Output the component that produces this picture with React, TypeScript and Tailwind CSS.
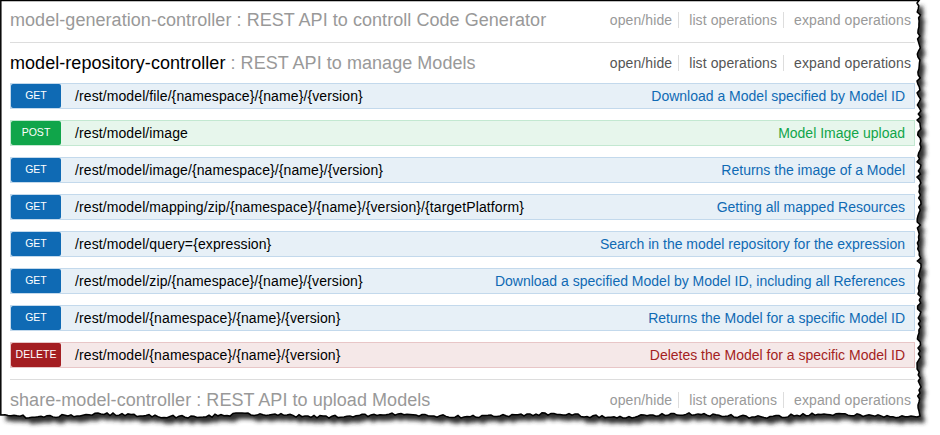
import React from "react";

type Method = "GET" | "POST" | "DELETE";

const ops: { m: Method; path: string; summary: string }[] = [
  { m: "GET", path: "/rest/model/file/{namespace}/{name}/{version}", summary: "Download a Model specified by Model ID" },
  { m: "POST", path: "/rest/model/image", summary: "Model Image upload" },
  { m: "GET", path: "/rest/model/image/{namespace}/{name}/{version}", summary: "Returns the image of a Model" },
  { m: "GET", path: "/rest/model/mapping/zip/{namespace}/{name}/{version}/{targetPlatform}", summary: "Getting all mapped Resources" },
  { m: "GET", path: "/rest/model/query={expression}", summary: "Search in the model repository for the expression" },
  { m: "GET", path: "/rest/model/zip/{namespace}/{name}/{version}", summary: "Download a specified Model by Model ID, including all References" },
  { m: "GET", path: "/rest/model/{namespace}/{name}/{version}", summary: "Returns the Model for a specific Model ID" },
  { m: "DELETE", path: "/rest/model/{namespace}/{name}/{version}", summary: "Deletes the Model for a specific Model ID" },
];

const styles: Record<Method, { row: string; badge: string; text: string }> = {
  GET: { row: "bg-[#e7f0f7] border-[#c3d9ec]", badge: "bg-[#0f6ab4]", text: "text-[#0f6ab4]" },
  POST: { row: "bg-[#e7f6ec] border-[#c3e8d1]", badge: "bg-[#10a54a]", text: "text-[#10a54a]" },
  DELETE: { row: "bg-[#f5e8e8] border-[#e8c6c7]", badge: "bg-[#a41e22]", text: "text-[#a41e22]" },
};

function rng(seed: number) {
  let s = seed;
  return () => {
    s = (s * 16807) % 2147483647;
    return (s - 1) / 2147483646;
  };
}

function paperPath() {
  const r = rng(11);
  const pts: [number, number][] = [[0.75, 0.5], [919, 0.5]];
  for (let y = 3; y < 414; y += 3) pts.push([919 + (r() - 0.5) * 4, y]);
  pts.push([920, 416]);
  for (let x = 917; x > 2; x -= 3) pts.push([x, 415.5 + (r() - 0.5) * 3 + Math.sin(x / 23) * 1.3]);
  pts.push([0.75, 415]);
  return "M" + pts.map((p) => p[0].toFixed(1) + "," + p[1].toFixed(1)).join("L") + "Z";
}

const PATH = paperPath();

function Links({ dark }: { dark?: boolean }) {
  const c = dark ? "text-[#555]" : "text-[#999]";
  return (
    <ul className={`flex items-center text-[14px] leading-4 tracking-[0.1px] ${c}`}>
      <li className="pr-[6px] border-r border-[#ddd]">open/hide</li>
      <li className="pl-[10px] pr-[6px] border-r border-[#ddd]">list operations</li>
      <li className="pl-[10px] pr-[4px]">expand operations</li>
    </ul>
  );
}

function Header({ name, desc, active, h }: { name: string; desc: string; active?: boolean; h: string }) {
  return (
    <div className={`flex items-center justify-between ${h}`}>
      <h2 className="text-[18px] leading-6 whitespace-nowrap tracking-[0.05px]">
        <span className={active ? "text-black" : "text-[#999]"}>{name}</span>
        <span className="text-[#999]"> : {desc}</span>
      </h2>
      <Links dark={active} />
    </div>
  );
}

export default function App() {
  return (
    <div className="relative w-[940px] h-[435px] bg-white overflow-hidden" style={{ fontFamily: '"Liberation Sans", Arial, sans-serif' }}>
      <svg className="absolute inset-0" width="940" height="435" viewBox="0 0 940 435">
        <defs>
          <filter id="sh" x="-5%" y="-5%" width="110%" height="110%">
            <feGaussianBlur stdDeviation="2.2" />
          </filter>
        </defs>
        <path d={PATH} transform="translate(5,6)" fill="#2e2e2e" filter="url(#sh)" />
        <path d={PATH} fill="#fff" stroke="#000" strokeWidth="1.5" />
      </svg>
      <div className="relative w-[915px] pl-[10px]">
        <Header name="model-generation-controller" desc="REST API to controll Code Generator" h="h-[43px] pb-[2px] border-b border-[#ddd]" />
        <div className="pb-[11px] border-b border-[#ddd]">
          <Header name="model-repository-controller" desc="REST API to manage Models" active h="h-[40px] pb-[1px]" />
          <ul className="flex flex-col gap-[11px]">
            {ops.map((o, i) => {
              const s = styles[o.m];
              return (
                <li key={i} className={`flex items-center h-[26px] border ${s.row}`}>
                  <span className={`flex items-center justify-center w-[50px] h-[24px] rounded-[2px] text-white text-[10.5px] ${s.badge}`}>
                    {o.m}
                  </span>
                  <span className="ml-[14px] text-[14px] text-black whitespace-nowrap tracking-[0.1px]">{o.path}</span>
                  <span className={`ml-auto pr-[9px] text-[14px] whitespace-nowrap ${s.text}`}>{o.summary}</span>
                </li>
              );
            })}
          </ul>
        </div>
        <Header name="share-model-controller" desc="REST API to upload Models" h="h-[40px]" />
      </div>
    </div>
  );
}
